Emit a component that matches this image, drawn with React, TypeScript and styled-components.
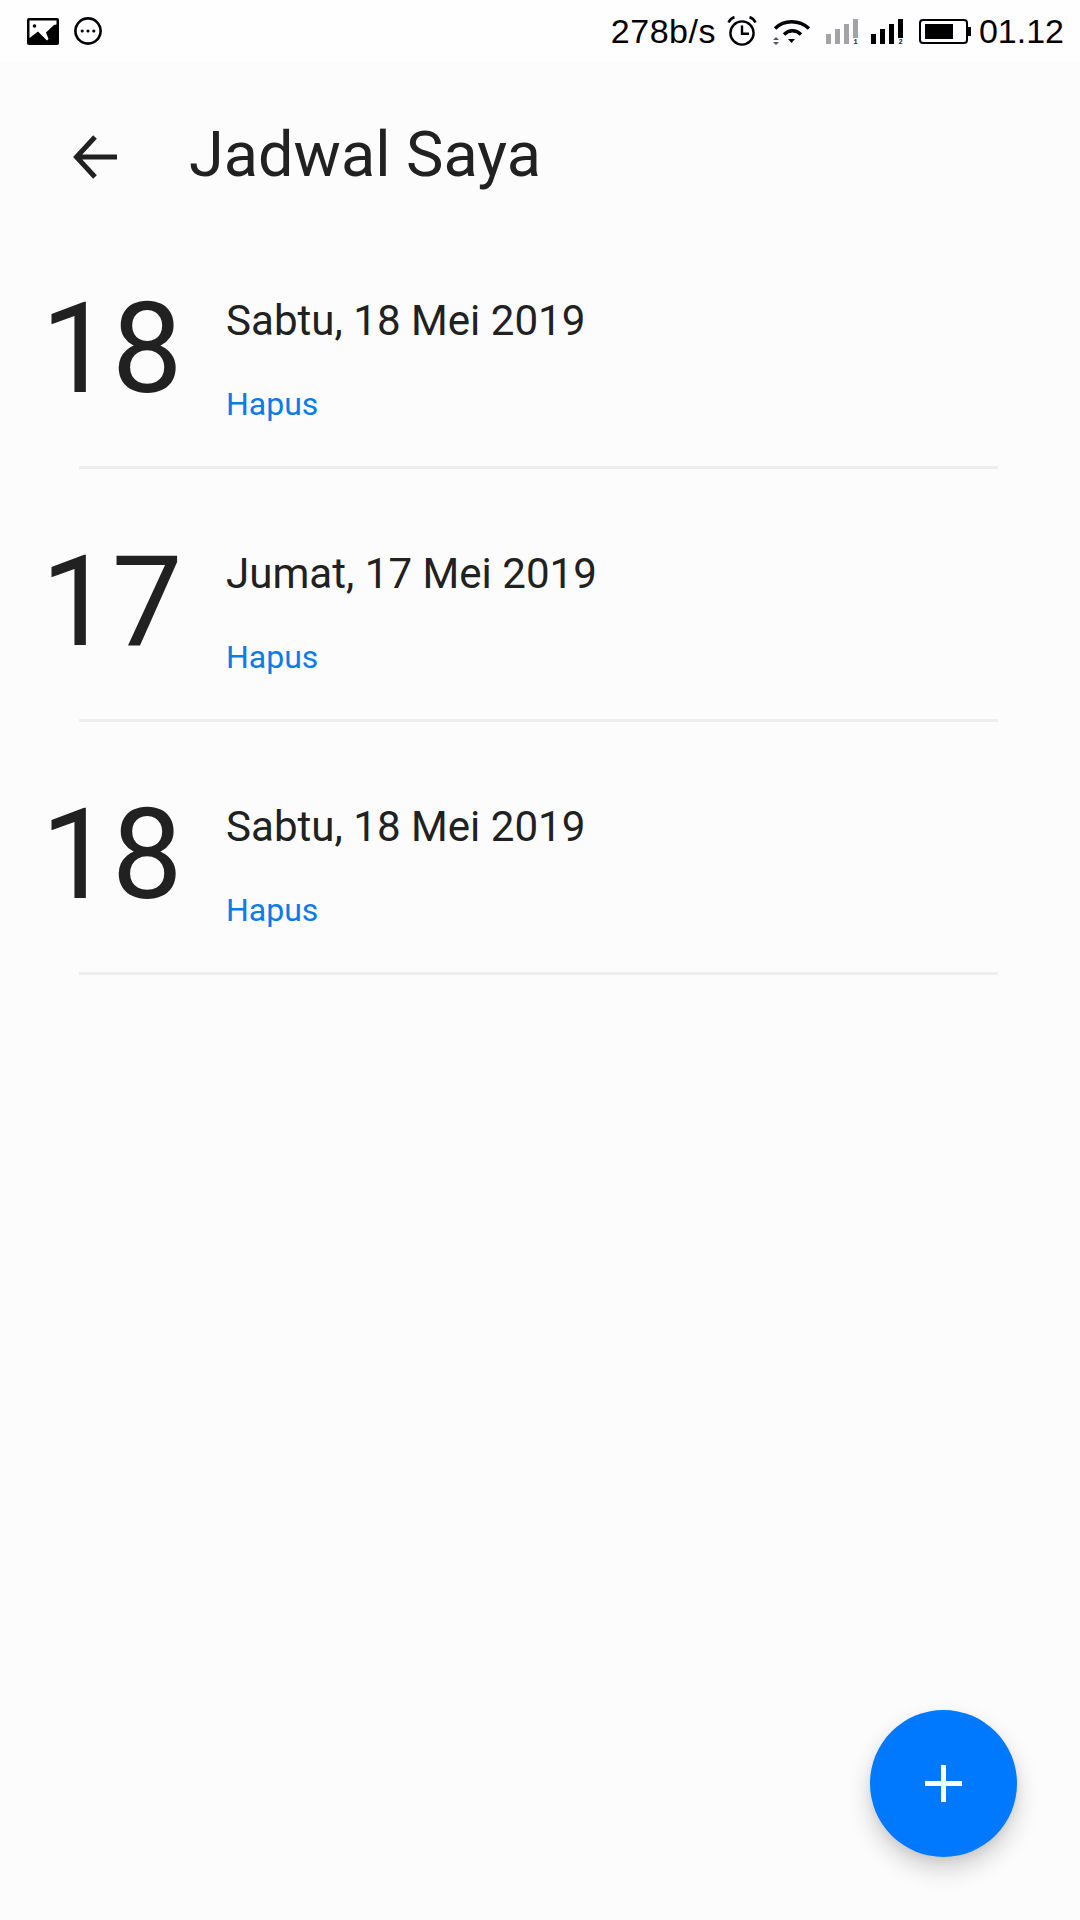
import React from 'react'
import styled, { createGlobalStyle } from 'styled-components'

const GlobalStyle = createGlobalStyle`
  html, body {
    margin: 0;
    padding: 0;
    background: #fcfcfc;
  }
  * {
    box-sizing: border-box;
  }
`

const Page = styled.div`
  position: relative;
  display: flex;
  flex-direction: column;
  width: 1080px;
  height: 1920px;
  overflow: hidden;
  background: #fcfcfc;
  font-family: Roboto, sans-serif;
  color: #212121;
`

const StatusBar = styled.div`
  display: flex;
  align-items: center;
  justify-content: space-between;
  height: 62px;
  padding: 0 16px 0 27px;
  background: #fefdff;
  color: #000;
`

const StatusGroup = styled.div`
  display: flex;
  align-items: center;
`

const StatusText = styled.span<{ $gap?: number; $tracking?: number }>`
  margin-left: ${({ $gap }) => $gap ?? 0}px;
  font-family: 'Liberation Sans', Arial, sans-serif;
  font-size: 34px;
  line-height: 34px;
  letter-spacing: ${({ $tracking }) => $tracking ?? 0}px;
`

const StatusIcon = styled.svg<{ $gap?: number }>`
  display: block;
  flex: none;
  margin-left: ${({ $gap }) => $gap ?? 0}px;
`

const SignalSvg = styled(StatusIcon)`
  margin-top: 3px;
`

const SimDigit = styled.text`
  font-family: 'Liberation Mono', monospace;
  font-size: 7px;
  font-weight: 700;
`

const Header = styled.header`
  display: flex;
  align-items: center;
  height: 154px;
  padding: 36px 0 0 73px;
`

const Title = styled.h1`
  margin: 0 0 4px 72px;
  font-size: 63px;
  font-weight: 400;
  line-height: 74px;
`

const List = styled.div`
  display: flex;
  flex-direction: column;
`

const Item = styled.div`
  display: flex;
  flex-direction: column;
  height: 253px;
`

const ItemBody = styled.div`
  display: flex;
  flex: 1;
  padding-left: 41px;
`

const DayNumber = styled.div`
  width: 185px;
  padding-top: 59px;
  font-size: 126px;
  font-weight: 400;
  line-height: 148px;
`

const ItemText = styled.div`
  display: flex;
  flex-direction: column;
  padding-top: 80px;
`

const DateLabel = styled.div`
  font-size: 42.1px;
  line-height: 50px;
`

const RemoveLink = styled.a`
  margin-top: 39px;
  font-size: 32px;
  line-height: 38px;
  color: #0a7bea;
`

const Divider = styled.div`
  height: 3px;
  margin: 0 82px 0 79px;
  background: #eeeeee;
`

const Fab = styled.button`
  position: absolute;
  left: 870px;
  top: 1710px;
  display: flex;
  align-items: center;
  justify-content: center;
  width: 147px;
  height: 147px;
  padding: 0;
  border: none;
  border-radius: 50%;
  background: #0079ff;
  box-shadow: 0 12px 24px rgba(0, 0, 0, 0.18), 0 4px 8px rgba(0, 0, 0, 0.06);
`

const schedule = [
  { day: '18', label: 'Sabtu, 18 Mei 2019' },
  { day: '17', label: 'Jumat, 17 Mei 2019' },
  { day: '18', label: 'Sabtu, 18 Mei 2019' },
]

function PictureIcon() {
  return (
    <StatusIcon width="32" height="27" viewBox="0 0 32 27">
      <rect width="32" height="27" rx="2" fill="#000" />
      <path d="M2.5 2.5H29.5V6.5L27 7L19 14.5L21.5 21L20 22.5L11 13.5L2.5 20Z" fill="#fff" />
      <circle cx="7.5" cy="8" r="1.8" fill="#000" />
    </StatusIcon>
  )
}

function ChatIcon() {
  return (
    <StatusIcon width="28" height="28" viewBox="0 0 28 28" $gap={15}>
      <circle cx="14" cy="14" r="12.6" fill="none" stroke="#000" strokeWidth="2.6" />
      <circle cx="8.2" cy="14" r="1.6" />
      <circle cx="14" cy="14" r="1.6" />
      <circle cx="19.8" cy="14" r="1.6" />
    </StatusIcon>
  )
}

function AlarmIcon() {
  return (
    <StatusIcon width="30" height="30" viewBox="0 0 30 30" $gap={11}>
      <circle cx="15" cy="17" r="11.6" fill="none" stroke="#000" strokeWidth="2.4" />
      <path d="M15 9.5v8.2h7" fill="none" stroke="#000" strokeWidth="2.4" />
      <path d="M1.5 6.5C3 3.5 5 1.8 7.5 1.2M28.5 6.5C27 3.5 25 1.8 22.5 1.2" fill="none" stroke="#000" strokeWidth="2.6" />
    </StatusIcon>
  )
}

function WifiIcon() {
  return (
    <StatusIcon width="38" height="27" viewBox="0 0 38 27" $gap={16}>
      <path d="M2 10.5C11 1.5 26 1.5 36 10.5" fill="none" stroke="#000" strokeWidth="3.4" />
      <path d="M11 16.5C16 11.5 23 11.5 28 16.5" fill="none" stroke="#000" strokeWidth="3.4" />
      <path d="M15 21h7l-3.5 4z" />
      <path d="M0 22h6l-3-3zM0 24h6l-3 3z" fill="#555" />
    </StatusIcon>
  )
}

function SignalIcon({ colour, sim, gap }: { colour: string; sim: string; gap: number }) {
  return (
    <SignalSvg width="32" height="28" viewBox="0 0 32 28" $gap={gap}>
      <rect x="0" y="15" width="5" height="10" fill={colour} />
      <rect x="9" y="10" width="5" height="15" fill={colour} />
      <rect x="18" y="5" width="5" height="20" fill={colour} />
      <rect x="27" y="0" width="5" height="19" fill={colour} />
      <SimDigit x="27.5" y="25" fill="#222">{sim}</SimDigit>
    </SignalSvg>
  )
}

function BatteryIcon() {
  return (
    <StatusIcon width="52" height="25" viewBox="0 0 52 25" $gap={16}>
      <rect x="1" y="1" width="47" height="23" rx="3" fill="none" stroke="#000" strokeWidth="2" />
      <rect x="6" y="5" width="28" height="15" fill="#000" />
      <rect x="49" y="8" width="3" height="9" fill="#000" />
    </StatusIcon>
  )
}

export default function App() {
  return (
    <Page>
      <GlobalStyle />
      <StatusBar>
        <StatusGroup>
          <PictureIcon />
          <ChatIcon />
        </StatusGroup>
        <StatusGroup>
          <StatusText $tracking={0.5}>278b/s</StatusText>
          <AlarmIcon />
          <WifiIcon />
          <SignalIcon colour="#a3a3a3" sim="1" gap={15} />
          <SignalIcon colour="#000" sim="2" gap={13} />
          <BatteryIcon />
          <StatusText $gap={8}>01.12</StatusText>
        </StatusGroup>
      </StatusBar>
      <Header>
        <svg width="44" height="44" viewBox="0 0 44 44" fill="none" stroke="#212121" strokeWidth="5">
          <path d="M44 22H4M22 2L3.5 22L22 42" />
        </svg>
        <Title>Jadwal Saya</Title>
      </Header>
      <List>
        {schedule.map((entry, i) => (
          <Item key={i}>
            <ItemBody>
              <DayNumber>{entry.day}</DayNumber>
              <ItemText>
                <DateLabel>{entry.label}</DateLabel>
                <RemoveLink>Hapus</RemoveLink>
              </ItemText>
            </ItemBody>
            <Divider />
          </Item>
        ))}
      </List>
      <Fab aria-label="Tambah">
        <svg width="37" height="37" viewBox="0 0 37 37" fill="#fff">
          <rect x="16" width="5" height="37" />
          <rect y="16" width="37" height="5" />
        </svg>
      </Fab>
    </Page>
  )
}
